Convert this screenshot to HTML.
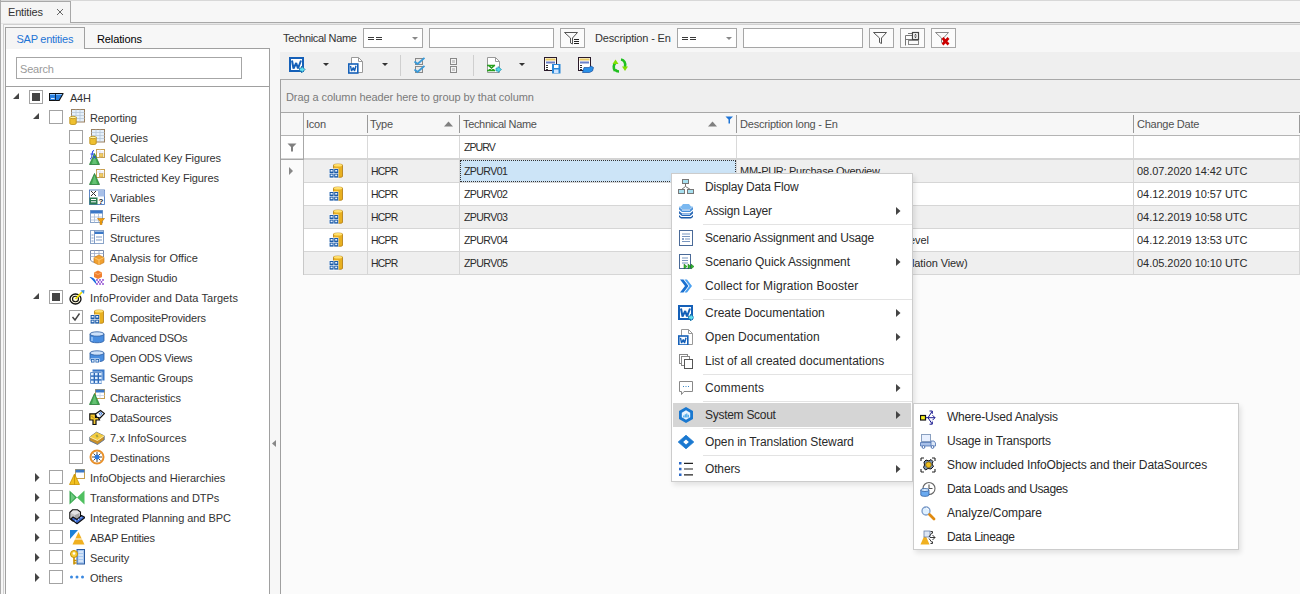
<!DOCTYPE html><html><head><meta charset="utf-8"><style>
html,body{margin:0;padding:0;}
body{width:1300px;height:594px;position:relative;overflow:hidden;background:#f7f7f7;font-family:"Liberation Sans",sans-serif;}
.a{position:absolute;}
.t{white-space:nowrap;}
</style></head><body>
<div class="a" style="left:0px;top:0px;width:1300px;height:22px;background:#f7f7f7;"></div>
<div class="a" style="left:0px;top:0px;width:1300px;height:1px;background:#d8d8d8;"></div>
<div class="a" style="left:70px;top:22px;width:1230px;height:1px;background:#a8a8a8;"></div>
<div class="a" style="left:0px;top:1px;width:71px;height:23px;background:#f5f5f5;border:1px solid #a8a8a8;border-bottom:none;box-sizing:border-box;"></div>
<div class="a t" style="left:8px;top:6.00px;font-size:11px;line-height:12px;color:#333;letter-spacing:-0.170px;">Entities</div>
<svg class="a" style="left:56px;top:8px;" width="8" height="8" viewBox="0 0 8 8"><path d="M1 1L7 7M7 1L1 7" stroke="#666" stroke-width="1"/></svg>
<div class="a" style="left:0px;top:0px;width:1px;height:594px;background:#ababab;"></div>
<div class="a" style="left:1px;top:23px;width:1299px;height:1px;background:#e6e6e6;"></div>
<div class="a" style="left:3px;top:24px;width:1297px;height:1px;background:#d0d0d0;"></div>
<div class="a" style="left:3px;top:24px;width:1px;height:570px;background:#d0d0d0;"></div>
<div class="a" style="left:5px;top:27px;width:80px;height:22px;background:#f5f5f5;border:1px solid #a0a0a0;border-bottom:none;box-sizing:border-box;"></div>
<div class="a t" style="left:16.5px;top:33.00px;font-size:11px;line-height:12px;color:#1e74d6;letter-spacing:-0.258px;">SAP entities</div>
<div class="a t" style="left:97px;top:33.00px;font-size:11px;line-height:12px;color:#000;letter-spacing:-0.122px;">Relations</div>
<div class="a" style="left:5px;top:48px;width:265px;height:546px;background:#ffffff;border:1px solid #a0a0a0;border-bottom:none;box-sizing:border-box;"></div>
<div class="a" style="left:84px;top:48px;width:186px;height:1px;background:#a0a0a0;"></div>
<div class="a" style="left:6px;top:48px;width:78px;height:1px;background:#f5f5f5;"></div>
<div class="a" style="left:16px;top:57px;width:226px;height:22px;background:#ffffff;border:1px solid #a6a6a6;box-sizing:border-box;"></div>
<div class="a t" style="left:20px;top:63.00px;font-size:11px;line-height:12px;color:#9a9a9a;letter-spacing:-0.194px;">Search</div>
<div class="a" style="left:6px;top:86px;width:263px;height:1px;background:#a0a0a0;"></div>
<svg class="a" style="left:13px;top:93px;" width="7" height="6" viewBox="0 0 7 6"><path d="M6 0L6 6L0 6Z" fill="#444"/></svg>
<div class="a" style="left:29px;top:90px;width:14px;height:14px;background:#fff;border:1px solid #a3a3a3;box-sizing:border-box;"></div>
<div class="a" style="left:32px;top:93px;width:8px;height:8px;background:#444;"></div>
<svg class="a" style="left:49px;top:89px;" width="16" height="16" viewBox="0 0 16 16"><path d="M0 4H14.5V5L10.5 12H0Z" fill="#111"/><path d="M1 5H13.3L9.8 11H1Z" fill="#2a80e0"/><path d="M1 5H13.3L12.7 6H1Z" fill="#8cc4ff"/><rect x="2" y="9" width="3.5" height="1" fill="#e0eeff"/><path d="M6.5 5V11.5" stroke="#0a2a50" stroke-width="1"/></svg>
<div class="a t" style="left:70px;top:92.00px;font-size:11px;line-height:12px;color:#333;letter-spacing:-0.259px;">A4H</div>
<svg class="a" style="left:33px;top:113px;" width="7" height="6" viewBox="0 0 7 6"><path d="M6 0L6 6L0 6Z" fill="#444"/></svg>
<div class="a" style="left:49px;top:110px;width:14px;height:14px;background:#fff;border:1px solid #a3a3a3;box-sizing:border-box;"></div>
<svg class="a" style="left:69px;top:109px;" width="16" height="16" viewBox="0 0 16 16"><rect x="2.5" y="0.5" width="13" height="12.5" fill="#e6f0fa" stroke="#9a8060"/><path d="M2.5 3.5H15.5M2.5 6.5H15.5M2.5 9.5H15.5M7 0.5V12.5M11 0.5V12.5" stroke="#b8c8d8" stroke-width="0.8"/><path d="M0.8 8.5V14.5C0.8 16 7.2 16 7.2 14.5V8.5Z" fill="#eec030" stroke="#b88a10" stroke-width="0.8"/><ellipse cx="4" cy="8.5" rx="3.2" ry="1.2" fill="#fff3a0" stroke="#b88a10" stroke-width="0.8"/></svg>
<div class="a t" style="left:90px;top:112.00px;font-size:11px;line-height:12px;color:#333;letter-spacing:-0.101px;">Reporting</div>
<div class="a" style="left:69px;top:130px;width:14px;height:14px;background:#fff;border:1px solid #a3a3a3;box-sizing:border-box;"></div>
<svg class="a" style="left:89px;top:129px;" width="16" height="16" viewBox="0 0 16 16"><rect x="2.5" y="0.5" width="13" height="12.5" fill="#e6f0fa" stroke="#9a8060"/><path d="M2.5 3.5H15.5M2.5 6.5H15.5M2.5 9.5H15.5M7 0.5V12.5M11 0.5V12.5" stroke="#b8c8d8" stroke-width="0.8"/><path d="M0.8 8.5V14.5C0.8 16 7.2 16 7.2 14.5V8.5Z" fill="#eec030" stroke="#b88a10" stroke-width="0.8"/><ellipse cx="4" cy="8.5" rx="3.2" ry="1.2" fill="#fff3a0" stroke="#b88a10" stroke-width="0.8"/></svg>
<div class="a t" style="left:110px;top:132.00px;font-size:11px;line-height:12px;color:#333;letter-spacing:-0.106px;">Queries</div>
<div class="a" style="left:69px;top:150px;width:14px;height:14px;background:#fff;border:1px solid #a3a3a3;box-sizing:border-box;"></div>
<svg class="a" style="left:89px;top:149px;" width="16" height="16" viewBox="0 0 16 16"><rect x="7.5" y="0.5" width="8" height="8" fill="#fff" stroke="#c8a050"/><path d="M7.5 3H15.5M11 0.5V8.5" stroke="#dde" stroke-width="0.8"/><rect x="10.5" y="4.5" width="3.5" height="3.5" fill="#f2cc60" stroke="#c8a050" stroke-width="0.6"/><path d="M0.5 15.5L5.5 4.5L10.5 15.5Z" fill="#3faa50" stroke="#2a7a38" stroke-width="0.8"/><path d="M5.5 6L8 15H3Z" fill="#7fd08a" opacity="0.6"/><path d="M5 1.5C3 1.5 3.5 4 3 6C2.5 8 2.5 10 1 10M1.5 5H5M4.5 7L6.5 9.5M6.5 7L4.5 9.5" fill="none" stroke="#1a3ae8" stroke-width="1"/></svg>
<div class="a t" style="left:110px;top:152.00px;font-size:11px;line-height:12px;color:#333;letter-spacing:-0.135px;">Calculated Key Figures</div>
<div class="a" style="left:69px;top:170px;width:14px;height:14px;background:#fff;border:1px solid #a3a3a3;box-sizing:border-box;"></div>
<svg class="a" style="left:89px;top:169px;" width="16" height="16" viewBox="0 0 16 16"><rect x="7.5" y="0.5" width="8" height="8" fill="#fff" stroke="#c8a050"/><path d="M7.5 3H15.5M11 0.5V8.5" stroke="#dde" stroke-width="0.8"/><rect x="10.5" y="4.5" width="3.5" height="3.5" fill="#f2cc60" stroke="#c8a050" stroke-width="0.6"/><path d="M0.5 15.5L5.5 4.5L10.5 15.5Z" fill="#3faa50" stroke="#2a7a38" stroke-width="0.8"/><path d="M5.5 6L8 15H3Z" fill="#7fd08a" opacity="0.6"/></svg>
<div class="a t" style="left:110px;top:172.00px;font-size:11px;line-height:12px;color:#333;letter-spacing:-0.113px;">Restricted Key Figures</div>
<div class="a" style="left:69px;top:190px;width:14px;height:14px;background:#fff;border:1px solid #a3a3a3;box-sizing:border-box;"></div>
<svg class="a" style="left:89px;top:189px;" width="16" height="16" viewBox="0 0 16 16"><rect x="0.5" y="1" width="15" height="14.5" fill="#fff" stroke="#3a6ab8" stroke-width="0.8"/><rect x="9" y="1.5" width="6.5" height="6" fill="#a8c0e8"/><path d="M2 2L7 7M7 2L2 7" stroke="#333" stroke-width="1"/><rect x="0.5" y="8.5" width="8" height="7" fill="#2a7a50"/><path d="M2 10.5H7M2 12.8H7" stroke="#fff" stroke-width="1"/><text x="9.5" y="15" font-size="8" font-weight="bold" fill="#222" font-family="Liberation Sans">?</text></svg>
<div class="a t" style="left:110px;top:192.00px;font-size:11px;line-height:12px;color:#333;letter-spacing:-0.020px;">Variables</div>
<div class="a" style="left:69px;top:210px;width:14px;height:14px;background:#fff;border:1px solid #a3a3a3;box-sizing:border-box;"></div>
<svg class="a" style="left:89px;top:209px;" width="16" height="16" viewBox="0 0 16 16"><rect x="1.5" y="1.5" width="12" height="12" fill="#fff" stroke="#8aa4c8"/><rect x="1.5" y="1.5" width="12" height="3" fill="#3a78c8"/><path d="M1.5 8H13.5M1.5 11H13.5M5.5 4.5V13.5M9.5 4.5V13.5" stroke="#a8bcd8" stroke-width="0.8"/><path d="M8.5 9.5H15.5L13 12.5V15.5H11V12.5Z" fill="#f0a010" stroke="#c87800" stroke-width="0.6"/></svg>
<div class="a t" style="left:110px;top:212.00px;font-size:11px;line-height:12px;color:#333;letter-spacing:-0.010px;">Filters</div>
<div class="a" style="left:69px;top:230px;width:14px;height:14px;background:#fff;border:1px solid #a3a3a3;box-sizing:border-box;"></div>
<svg class="a" style="left:89px;top:229px;" width="16" height="16" viewBox="0 0 16 16"><rect x="1.5" y="1.5" width="13" height="13" fill="#fff" stroke="#8aa4c8"/><rect x="5.5" y="2.5" width="9" height="2.5" fill="#3a78c8"/><path d="M5.5 1.5V14.5M2.5 6H4.5M2.5 9H4.5M2.5 12H4.5M7 8H13M7 11H13" stroke="#7090c0" stroke-width="0.9"/></svg>
<div class="a t" style="left:110px;top:232.00px;font-size:11px;line-height:12px;color:#333;letter-spacing:-0.027px;">Structures</div>
<div class="a" style="left:69px;top:250px;width:14px;height:14px;background:#fff;border:1px solid #a3a3a3;box-sizing:border-box;"></div>
<svg class="a" style="left:89px;top:249px;" width="16" height="16" viewBox="0 0 16 16"><path d="M1.5 1.5H14.5V8L8 13H3.5L1.5 11Z" fill="#fff" stroke="#7a8aa8"/><path d="M1.5 4.5H14.5M1.5 7.5H8M5.5 1.5V10M10 1.5V6" stroke="#9aaac8" stroke-width="0.8"/><path d="M10 6L15 8.5V13.5L10 16L5 13.5V8.5Z" fill="#f0a030" stroke="#c07010" stroke-width="0.6"/><path d="M5 8.5L10 11L15 8.5M10 11V16" stroke="#ffd080" stroke-width="0.8" fill="none"/></svg>
<div class="a t" style="left:110px;top:252.00px;font-size:11px;line-height:12px;color:#333;letter-spacing:-0.031px;">Analysis for Office</div>
<div class="a" style="left:69px;top:270px;width:14px;height:14px;background:#fff;border:1px solid #a3a3a3;box-sizing:border-box;"></div>
<svg class="a" style="left:89px;top:269px;" width="16" height="16" viewBox="0 0 16 16"><path d="M0.5 8C4 8 7 10 7.5 15.5C5 13 3 10 0.5 8Z" fill="#1a6ae0"/><path d="M9 1.5L13 3.5V8L9 10L5 8V3.5Z" fill="#f08030"/><path d="M5 3.5L9 5.5L13 3.5" stroke="#ffc080" fill="none" stroke-width="0.8"/><g fill="#8a40d0"><circle cx="8" cy="11" r="0.9"/><circle cx="11" cy="11" r="0.9"/><circle cx="14" cy="11" r="0.9"/><circle cx="9.5" cy="13" r="0.9"/><circle cx="12.5" cy="13" r="0.9"/><circle cx="8" cy="15" r="0.9"/><circle cx="11" cy="15" r="0.9"/><circle cx="14" cy="15" r="0.9"/></g></svg>
<div class="a t" style="left:110px;top:272.00px;font-size:11px;line-height:12px;color:#333;letter-spacing:-0.092px;">Design Studio</div>
<svg class="a" style="left:33px;top:293px;" width="7" height="6" viewBox="0 0 7 6"><path d="M6 0L6 6L0 6Z" fill="#444"/></svg>
<div class="a" style="left:49px;top:290px;width:14px;height:14px;background:#fff;border:1px solid #a3a3a3;box-sizing:border-box;"></div>
<div class="a" style="left:52px;top:293px;width:8px;height:8px;background:#444;"></div>
<svg class="a" style="left:69px;top:289px;" width="16" height="16" viewBox="0 0 16 16"><ellipse cx="6.5" cy="10" rx="5.5" ry="5" fill="#fffbe0" stroke="#111" stroke-width="1.3"/><ellipse cx="6.5" cy="10" rx="3" ry="2.7" fill="none" stroke="#111" stroke-width="1.1"/><path d="M6.5 10L13 3" stroke="#f0e000" stroke-width="1.8"/><path d="M11.5 1.5L15.5 1L15 5L13 3Z" fill="#3a90e0"/></svg>
<div class="a t" style="left:90px;top:292.00px;font-size:11px;line-height:12px;color:#333;letter-spacing:0.070px;">InfoProvider and Data Targets</div>
<div class="a" style="left:69px;top:310px;width:14px;height:14px;background:#fff;border:1px solid #a3a3a3;box-sizing:border-box;"></div>
<svg class="a" style="left:71px;top:312px;" width="10" height="10" viewBox="0 0 10 10"><path d="M1.5 5L4 8L8.5 1.5" fill="none" stroke="#444" stroke-width="1.4"/></svg>
<svg class="a" style="left:89px;top:309px;" width="16" height="16" viewBox="0 0 16 16"><path d="M5.5 2C5.5 0.8 14.5 0.8 14.5 2V13.5C14.5 14.7 5.5 14.7 5.5 13.5Z" fill="#e8b020" stroke="#b07a10" stroke-width="0.8"/><ellipse cx="10" cy="2.2" rx="4.3" ry="1.3" fill="#ffe070"/><rect x="1" y="5.5" width="9.5" height="10" fill="#fff"/><rect x="1.6" y="6.0" width="4" height="4" fill="#1a5aa8"/><rect x="2.6" y="7.0" width="2" height="1.6" fill="#e8f2ff"/><rect x="1.6" y="10.6" width="4" height="4" fill="#1a5aa8"/><rect x="2.6" y="11.6" width="2" height="1.6" fill="#e8f2ff"/><rect x="6.199999999999999" y="6.0" width="4" height="4" fill="#1a5aa8"/><rect x="7.199999999999999" y="7.0" width="2" height="1.6" fill="#e8f2ff"/><rect x="6.199999999999999" y="10.6" width="4" height="4" fill="#1a5aa8"/><rect x="7.199999999999999" y="11.6" width="2" height="1.6" fill="#e8f2ff"/></svg>
<div class="a t" style="left:110px;top:312.00px;font-size:11px;line-height:12px;color:#333;letter-spacing:-0.185px;">CompositeProviders</div>
<div class="a" style="left:69px;top:330px;width:14px;height:14px;background:#fff;border:1px solid #a3a3a3;box-sizing:border-box;"></div>
<svg class="a" style="left:89px;top:329px;" width="16" height="16" viewBox="0 0 16 16"><path d="M1 5V11.5C1 14.5 15 14.5 15 11.5V5Z" fill="#4a8ee0" stroke="#2a5aa0" stroke-width="0.8"/><ellipse cx="8" cy="5" rx="7" ry="2.2" fill="#cfe2fa" stroke="#2a5aa0" stroke-width="0.8"/><path d="M3 8V12" stroke="#a0c8f8" stroke-width="1.5"/></svg>
<div class="a t" style="left:110px;top:332.00px;font-size:11px;line-height:12px;color:#333;letter-spacing:-0.328px;">Advanced DSOs</div>
<div class="a" style="left:69px;top:350px;width:14px;height:14px;background:#fff;border:1px solid #a3a3a3;box-sizing:border-box;"></div>
<svg class="a" style="left:89px;top:349px;" width="16" height="16" viewBox="0 0 16 16"><path d="M1 4V10.5C1 13.5 15 13.5 15 10.5V4Z" fill="#4a8ee0" stroke="#2a5aa0" stroke-width="0.8"/><ellipse cx="8" cy="4" rx="7" ry="2.2" fill="#cfe2fa" stroke="#2a5aa0" stroke-width="0.8"/><rect x="1.5" y="9.5" width="9" height="6" fill="#fff"/><rect x="2" y="10" width="3.5" height="3.5" fill="#2060b0"/><rect x="6.5" y="10" width="3.5" height="3.5" fill="#2060b0"/><rect x="2.8" y="10.8" width="1.9" height="1.9" fill="#dfeeff"/><rect x="7.3" y="10.8" width="1.9" height="1.9" fill="#dfeeff"/></svg>
<div class="a t" style="left:110px;top:352.00px;font-size:11px;line-height:12px;color:#333;letter-spacing:-0.278px;">Open ODS Views</div>
<div class="a" style="left:69px;top:370px;width:14px;height:14px;background:#fff;border:1px solid #a3a3a3;box-sizing:border-box;"></div>
<svg class="a" style="left:89px;top:369px;" width="16" height="16" viewBox="0 0 16 16"><rect x="3.5" y="0.5" width="12" height="11" fill="#3a78c8"/><rect x="1" y="3" width="12" height="12" fill="#2a68b8" stroke="#fff" stroke-width="0.6"/><rect x="2" y="4.0" width="2.6" height="2.4" fill="#dfeeff"/><rect x="2" y="7.8" width="2.6" height="2.4" fill="#dfeeff"/><rect x="2" y="11.6" width="2.6" height="2.4" fill="#dfeeff"/><rect x="6" y="4.0" width="2.6" height="2.4" fill="#dfeeff"/><rect x="6" y="7.8" width="2.6" height="2.4" fill="#dfeeff"/><rect x="6" y="11.6" width="2.6" height="2.4" fill="#dfeeff"/><rect x="10" y="4.0" width="2.6" height="2.4" fill="#dfeeff"/><rect x="10" y="7.8" width="2.6" height="2.4" fill="#dfeeff"/><rect x="10" y="11.6" width="2.6" height="2.4" fill="#dfeeff"/></svg>
<div class="a t" style="left:110px;top:372.00px;font-size:11px;line-height:12px;color:#333;letter-spacing:-0.150px;">Semantic Groups</div>
<div class="a" style="left:69px;top:390px;width:14px;height:14px;background:#fff;border:1px solid #a3a3a3;box-sizing:border-box;"></div>
<svg class="a" style="left:89px;top:389px;" width="16" height="16" viewBox="0 0 16 16"><rect x="6.5" y="0.5" width="9" height="9" fill="#fff" stroke="#c8a050"/><rect x="6.5" y="0.5" width="9" height="3" fill="#3a78c8"/><path d="M11 3.5V9.5M6.5 6.5H15.5" stroke="#c8d4e8" stroke-width="0.8"/><path d="M0.5 15.5L5.5 4.5L10.5 15.5Z" fill="#3faa50" stroke="#2a7a38" stroke-width="0.8"/><path d="M5.5 6L8 15H3Z" fill="#7fd08a" opacity="0.6"/></svg>
<div class="a t" style="left:110px;top:392.00px;font-size:11px;line-height:12px;color:#333;letter-spacing:-0.133px;">Characteristics</div>
<div class="a" style="left:69px;top:410px;width:14px;height:14px;background:#fff;border:1px solid #a3a3a3;box-sizing:border-box;"></div>
<svg class="a" style="left:89px;top:409px;" width="16" height="16" viewBox="0 0 16 16"><path d="M0.8 4.8H6.5V8.5H9.5L10.5 11H7V15.5H4V11H0.8Z" fill="#f4c830" stroke="#111" stroke-width="1.2"/><path d="M2.5 7L5 9.5" stroke="#a07000" stroke-width="0.8"/><path d="M6.5 5L11.5 1.5L15.5 4.5L11 9L7.5 8Z" fill="#fff" stroke="#111" stroke-width="1.2"/><path d="M10 4L11.5 6.5M11.5 3L13 5.5" stroke="#2a6ad0" stroke-width="1.1"/></svg>
<div class="a t" style="left:110px;top:412.00px;font-size:11px;line-height:12px;color:#333;letter-spacing:-0.221px;">DataSources</div>
<div class="a" style="left:69px;top:430px;width:14px;height:14px;background:#fff;border:1px solid #a3a3a3;box-sizing:border-box;"></div>
<svg class="a" style="left:89px;top:429px;" width="16" height="16" viewBox="0 0 16 16"><path d="M0.8 8L7.5 3.2L15.2 6.8V10.8L8.5 15.5L0.8 11.8Z" fill="#c8902a" stroke="#5a7090" stroke-width="0.9"/><path d="M0.8 8L7.5 3.2L15.2 6.8L8.5 11.5Z" fill="#f4cc40"/><path d="M0.8 8L8.5 11.5L15.2 6.8" fill="none" stroke="#fff4c0" stroke-width="0.9"/><path d="M6.5 6L8.5 5.5L9.5 8L7.5 8.5Z" fill="#a8a040"/></svg>
<div class="a t" style="left:110px;top:432.00px;font-size:11px;line-height:12px;color:#333;letter-spacing:-0.003px;">7.x InfoSources</div>
<div class="a" style="left:69px;top:450px;width:14px;height:14px;background:#fff;border:1px solid #a3a3a3;box-sizing:border-box;"></div>
<svg class="a" style="left:89px;top:449px;" width="16" height="16" viewBox="0 0 16 16"><circle cx="8" cy="8" r="6.5" fill="#fff" stroke="#e8902a" stroke-width="2"/><path d="M8 3V13M3 8H13M4.5 4.5L11.5 11.5M11.5 4.5L4.5 11.5" stroke="#333" stroke-width="0.9"/><circle cx="8" cy="8" r="2.5" fill="#2a78e0"/></svg>
<div class="a t" style="left:110px;top:452.00px;font-size:11px;line-height:12px;color:#333;letter-spacing:-0.059px;">Destinations</div>
<svg class="a" style="left:35px;top:473px;" width="5" height="9" viewBox="0 0 5 9"><path d="M0 0L4.5 4.5L0 9Z" fill="#444"/></svg>
<div class="a" style="left:49px;top:470px;width:14px;height:14px;background:#fff;border:1px solid #a3a3a3;box-sizing:border-box;"></div>
<svg class="a" style="left:69px;top:469px;" width="16" height="16" viewBox="0 0 16 16"><rect x="6.5" y="0.5" width="9" height="9" fill="#fff" stroke="#c8a050"/><rect x="6.5" y="0.5" width="9" height="3" fill="#3a78c8"/><path d="M0.5 15.5L5.5 5L10.5 15.5Z" fill="#f0c020" stroke="#c89000" stroke-width="0.8"/><path d="M5.5 6V15.5" stroke="#c89000" stroke-width="0.8"/></svg>
<div class="a t" style="left:90px;top:472.00px;font-size:11px;line-height:12px;color:#333;letter-spacing:-0.017px;">InfoObjects and Hierarchies</div>
<svg class="a" style="left:35px;top:493px;" width="5" height="9" viewBox="0 0 5 9"><path d="M0 0L4.5 4.5L0 9Z" fill="#444"/></svg>
<div class="a" style="left:49px;top:490px;width:14px;height:14px;background:#fff;border:1px solid #a3a3a3;box-sizing:border-box;"></div>
<svg class="a" style="left:69px;top:489px;" width="16" height="16" viewBox="0 0 16 16"><path d="M0.5 1.5L8 8.5L0.5 15.5Z" fill="#3aa850"/><path d="M15.5 1.5L8 8.5L15.5 15.5Z" fill="#50c060"/><path d="M2 4L6 8.5L2 13Z" fill="#90e0a0" opacity="0.6"/></svg>
<div class="a t" style="left:90px;top:492.00px;font-size:11px;line-height:12px;color:#333;letter-spacing:-0.080px;">Transformations and DTPs</div>
<svg class="a" style="left:35px;top:513px;" width="5" height="9" viewBox="0 0 5 9"><path d="M0 0L4.5 4.5L0 9Z" fill="#444"/></svg>
<div class="a" style="left:49px;top:510px;width:14px;height:14px;background:#fff;border:1px solid #a3a3a3;box-sizing:border-box;"></div>
<svg class="a" style="left:69px;top:509px;" width="16" height="16" viewBox="0 0 16 16"><path d="M0.8 3.5L3.5 0.8H8.5L11.5 3V9.5L8 12H3.5L0.8 9.5Z" fill="#e4e4e4" stroke="#111" stroke-width="1.1"/><path d="M2 4L6 6V11L2 9Z" fill="#c4c4c4"/><path d="M6 6L10.5 4V9L6 11Z" fill="#a8a8a8"/><path d="M2 10L8 14.8L16 8.5L12.5 6.5L8 10.5L4 8Z" fill="#3a68d0" stroke="#111" stroke-width="1.1" stroke-linejoin="round"/><path d="M6 11.5L7 12.3M9 10.8L10 10M11.5 9L12.5 8.2" stroke="#a8c8ff" stroke-width="1.1"/></svg>
<div class="a t" style="left:90px;top:512.00px;font-size:11px;line-height:12px;color:#333;letter-spacing:-0.062px;">Integrated Planning and BPC</div>
<svg class="a" style="left:35px;top:533px;" width="5" height="9" viewBox="0 0 5 9"><path d="M0 0L4.5 4.5L0 9Z" fill="#444"/></svg>
<div class="a" style="left:49px;top:530px;width:14px;height:14px;background:#fff;border:1px solid #a3a3a3;box-sizing:border-box;"></div>
<svg class="a" style="left:69px;top:529px;" width="16" height="16" viewBox="0 0 16 16"><path d="M1 1H9L1 10Z" fill="#1a80d8"/><path d="M3.5 15.5L9.5 3L15.5 15.5Z" fill="#f0b020"/><path d="M6 10H13" stroke="#fff" stroke-width="1"/></svg>
<div class="a t" style="left:90px;top:532.00px;font-size:11px;line-height:12px;color:#333;letter-spacing:-0.283px;">ABAP Entities</div>
<svg class="a" style="left:35px;top:553px;" width="5" height="9" viewBox="0 0 5 9"><path d="M0 0L4.5 4.5L0 9Z" fill="#444"/></svg>
<div class="a" style="left:49px;top:550px;width:14px;height:14px;background:#fff;border:1px solid #a3a3a3;box-sizing:border-box;"></div>
<svg class="a" style="left:69px;top:549px;" width="16" height="16" viewBox="0 0 16 16"><rect x="8" y="0.5" width="7.5" height="14.5" fill="#a8c8f0" stroke="#2a5aa0"/><path d="M9.5 3H14M9.5 6H14M9.5 9H14M9.5 12H14" stroke="#fff" stroke-width="1"/><circle cx="5" cy="5" r="3.5" fill="#f8d040" stroke="#c89000"/><circle cx="5" cy="4.5" r="1.2" fill="#fff"/><path d="M5 8.5V15.5M5 11.5H7.5M5 14H7.5" stroke="#c89000" stroke-width="1.6"/></svg>
<div class="a t" style="left:90px;top:552.00px;font-size:11px;line-height:12px;color:#333;letter-spacing:-0.079px;">Security</div>
<svg class="a" style="left:35px;top:573px;" width="5" height="9" viewBox="0 0 5 9"><path d="M0 0L4.5 4.5L0 9Z" fill="#444"/></svg>
<div class="a" style="left:49px;top:570px;width:14px;height:14px;background:#fff;border:1px solid #a3a3a3;box-sizing:border-box;"></div>
<svg class="a" style="left:69px;top:569px;" width="16" height="16" viewBox="0 0 16 16"><circle cx="2.5" cy="8" r="1.5" fill="#3a88e0"/><circle cx="8" cy="8" r="1.5" fill="#3a88e0"/><circle cx="13.5" cy="8" r="1.5" fill="#3a88e0"/></svg>
<div class="a t" style="left:90px;top:572.00px;font-size:11px;line-height:12px;color:#333;letter-spacing:-0.106px;">Others</div>
<div class="a" style="left:270px;top:48px;width:10px;height:546px;background:#f7f7f7;"></div>
<svg class="a" style="left:272px;top:440px;" width="5" height="7" viewBox="0 0 5 7"><path d="M4 0L4 7L0 3.5Z" fill="#888"/></svg>
<div class="a" style="left:280px;top:25px;width:1020px;height:27px;background:#f7f7f7;"></div>
<div class="a t" style="left:283px;top:32.00px;font-size:11px;line-height:12px;color:#333;letter-spacing:-0.336px;">Technical Name</div>
<div class="a" style="left:363px;top:28px;width:60px;height:20px;background:#fff;border:1px solid #a6a6a6;box-sizing:border-box;"></div>
<svg class="a" style="left:368px;top:36px;" width="16" height="5" viewBox="0 0 16 5"><path d="M0 1.5H6M8 1.5H14M0 3.5H6M8 3.5H14" stroke="#3a3a3a" stroke-width="1"/></svg>
<svg class="a" style="left:412px;top:37px;" width="7" height="4" viewBox="0 0 7 4"><path d="M0 0L6 0L3 3Z" fill="#888"/></svg>
<div class="a" style="left:429px;top:28px;width:125px;height:20px;background:#fff;border:1px solid #a6a6a6;box-sizing:border-box;"></div>
<div class="a" style="left:560px;top:28px;width:25px;height:20px;background:#fbfbfb;border:1px solid #a6a6a6;box-sizing:border-box;"></div>
<svg class="a" style="left:563px;top:30px;" width="18" height="16" viewBox="0 0 18 16"><path d="M1.5 2.5H14.5L9.5 8V14L7.5 13V8Z" fill="none" stroke="#555" stroke-width="1"/><rect x="10" y="8" width="7" height="8" fill="#fbfbfb"/><path d="M11 9.5H16M11 11.5H16M11 13.5H16" stroke="#222" stroke-width="1"/></svg>
<div class="a t" style="left:595px;top:32.00px;font-size:11px;line-height:12px;color:#333;letter-spacing:-0.158px;">Description - En</div>
<div class="a" style="left:677px;top:28px;width:60px;height:20px;background:#fff;border:1px solid #a6a6a6;box-sizing:border-box;"></div>
<svg class="a" style="left:682px;top:36px;" width="16" height="5" viewBox="0 0 16 5"><path d="M0 1.5H6M8 1.5H14M0 3.5H6M8 3.5H14" stroke="#3a3a3a" stroke-width="1"/></svg>
<svg class="a" style="left:726px;top:37px;" width="7" height="4" viewBox="0 0 7 4"><path d="M0 0L6 0L3 3Z" fill="#888"/></svg>
<div class="a" style="left:743px;top:28px;width:120px;height:20px;background:#fff;border:1px solid #a6a6a6;box-sizing:border-box;"></div>
<div class="a" style="left:869px;top:28px;width:25px;height:20px;background:#fbfbfb;border:1px solid #a6a6a6;box-sizing:border-box;"></div>
<svg class="a" style="left:872px;top:30px;" width="18" height="16" viewBox="0 0 18 16"><path d="M1.5 2.5H14.5L9.5 8V13.5L7.5 12.5V8Z" fill="none" stroke="#555" stroke-width="1"/></svg>
<div class="a" style="left:900px;top:28px;width:25px;height:20px;background:#fbfbfb;border:1px solid #a6a6a6;box-sizing:border-box;"></div>
<svg class="a" style="left:903px;top:30px;" width="18" height="16" viewBox="0 0 18 16"><path d="M2.5 15.5V5.5H15M5 3.5H15.5" fill="none" stroke="#777" stroke-width="1"/><rect x="9.5" y="2.5" width="6" height="7" fill="#fff" stroke="#444" stroke-width="1.2"/><path d="M12.5 3.8L11 5.5H14ZM12.5 8.2L11 6.5H14Z" fill="#444"/><rect x="5.5" y="10.5" width="10" height="4" fill="none" stroke="#888" stroke-width="1"/><path d="M2.5 9.5H9" stroke="#777"/></svg>
<div class="a" style="left:931px;top:28px;width:25px;height:20px;background:#fbfbfb;border:1px solid #a6a6a6;box-sizing:border-box;"></div>
<svg class="a" style="left:934px;top:30px;" width="18" height="16" viewBox="0 0 18 16"><path d="M1.5 2.5H14.5L9.5 8V13.5L7.5 12.5V8Z" fill="none" stroke="#888" stroke-width="1"/><path d="M8.5 8L14.5 14.5M14.5 8L8.5 14.5" stroke="#cc0000" stroke-width="2.6"/></svg>
<div class="a" style="left:280px;top:52px;width:1020px;height:27px;background:#efefef;"></div>
<svg class="a" style="left:323px;top:63px;" width="6" height="4" viewBox="0 0 6 4"><path d="M0 0H6L3 3Z" fill="#333"/></svg>
<svg class="a" style="left:382px;top:63px;" width="6" height="4" viewBox="0 0 6 4"><path d="M0 0H6L3 3Z" fill="#333"/></svg>
<svg class="a" style="left:519px;top:63px;" width="6" height="4" viewBox="0 0 6 4"><path d="M0 0H6L3 3Z" fill="#333"/></svg>
<div class="a" style="left:400px;top:55px;width:1px;height:21px;background:#cfcfcf;"></div>
<div class="a" style="left:473px;top:55px;width:1px;height:21px;background:#cfcfcf;"></div>
<div class="a" style="left:280px;top:79px;width:1020px;height:515px;background:#fbfbfb;border-left:1px solid #a0a0a0;border-top:1px solid #a8a8a8;box-sizing:border-box;"></div>
<div class="a" style="left:281px;top:80px;width:1019px;height:32px;background:#efefef;"></div>
<div class="a t" style="left:286px;top:91.00px;font-size:11px;line-height:12px;color:#7a7a7a;letter-spacing:-0.084px;">Drag a column header here to group by that column</div>
<div class="a" style="left:281px;top:112px;width:1019px;height:1px;background:#a8a8a8;"></div>
<div class="a" style="left:281px;top:113px;width:1019px;height:22px;background:#f7f7f7;"></div>
<div class="a" style="left:281px;top:135px;width:1019px;height:1px;background:#b4b4b4;"></div>
<div class="a" style="left:367px;top:115px;width:1px;height:18px;background:#9a9a9a;"></div>
<div class="a" style="left:459px;top:115px;width:1px;height:18px;background:#9a9a9a;"></div>
<div class="a" style="left:736px;top:115px;width:1px;height:18px;background:#9a9a9a;"></div>
<div class="a" style="left:1133px;top:115px;width:1px;height:18px;background:#9a9a9a;"></div>
<div class="a" style="left:1299px;top:115px;width:1px;height:18px;background:#9a9a9a;"></div>
<div class="a" style="left:303px;top:113px;width:1px;height:46px;background:#a8a8a8;"></div>
<div class="a t" style="left:306px;top:118.00px;font-size:11px;line-height:12px;color:#505050;letter-spacing:-0.250px;">Icon</div>
<div class="a t" style="left:370px;top:118.00px;font-size:11px;line-height:12px;color:#505050;letter-spacing:-0.250px;">Type</div>
<div class="a t" style="left:463px;top:118.00px;font-size:11px;line-height:12px;color:#505050;letter-spacing:-0.336px;">Technical Name</div>
<div class="a t" style="left:740px;top:118.00px;font-size:11px;line-height:12px;color:#505050;letter-spacing:-0.211px;">Description long - En</div>
<div class="a t" style="left:1137px;top:118.00px;font-size:11px;line-height:12px;color:#505050;letter-spacing:-0.250px;">Change Date</div>
<svg class="a" style="left:444px;top:121px;" width="10" height="6" viewBox="0 0 10 6"><path d="M0 5.5L4.5 0.5L9 5.5Z" fill="#808080"/></svg>
<svg class="a" style="left:708px;top:121px;" width="10" height="6" viewBox="0 0 10 6"><path d="M0 5.5L4.5 0.5L9 5.5Z" fill="#808080"/></svg>
<svg class="a" style="left:725px;top:116px;" width="9" height="8" viewBox="0 0 9 8"><path d="M0.5 0.5H8L5 3.5V7.5H3.5V3.5Z" fill="#1e74d6"/></svg>
<div class="a" style="left:281px;top:136px;width:1018px;height:22px;background:#ffffff;"></div>
<div class="a" style="left:303px;top:113px;width:1px;height:46px;background:#a8a8a8;"></div>
<div class="a" style="left:367px;top:136px;width:1px;height:22px;background:#d9d9d9;"></div>
<div class="a" style="left:459px;top:136px;width:1px;height:22px;background:#d9d9d9;"></div>
<div class="a" style="left:736px;top:136px;width:1px;height:22px;background:#d9d9d9;"></div>
<div class="a" style="left:1133px;top:136px;width:1px;height:22px;background:#d9d9d9;"></div>
<div class="a" style="left:1299px;top:136px;width:1px;height:22px;background:#d9d9d9;"></div>
<svg class="a" style="left:287px;top:143px;" width="10" height="9" viewBox="0 0 10 9"><path d="M0.5 0.5H9.5L6 4V8.5H4V4Z" fill="#808080"/></svg>
<div class="a t" style="left:464px;top:141.00px;font-size:10.6px;line-height:12px;color:#2a2a2a;letter-spacing:-0.971px;">ZPURV</div>
<div class="a" style="left:281px;top:158px;width:1019px;height:2px;background:#d4d4d4;"></div>
<div class="a" style="left:281px;top:159px;width:22px;height:1px;background:#a8a8a8;"></div>
<div class="a" style="left:303px;top:160px;width:997px;height:22px;background:#efefef;"></div>
<div class="a" style="left:303px;top:182px;width:997px;height:1px;background:#d6d6d6;"></div>
<div class="a" style="left:367px;top:160px;width:1px;height:23px;background:#d6d6d6;"></div>
<div class="a" style="left:459px;top:160px;width:1px;height:23px;background:#d6d6d6;"></div>
<div class="a" style="left:736px;top:160px;width:1px;height:23px;background:#d6d6d6;"></div>
<div class="a" style="left:1133px;top:160px;width:1px;height:23px;background:#d6d6d6;"></div>
<div class="a" style="left:1299px;top:160px;width:1px;height:23px;background:#d6d6d6;"></div>
<svg class="a" style="left:328px;top:163px;" width="16" height="16" viewBox="0 0 16 16"><path d="M5.5 2C5.5 0.8 14.5 0.8 14.5 2V13.5C14.5 14.7 5.5 14.7 5.5 13.5Z" fill="#e8b020" stroke="#b07a10" stroke-width="0.8"/><ellipse cx="10" cy="2.2" rx="4.3" ry="1.3" fill="#ffe070"/><rect x="1" y="5.5" width="9.5" height="10" fill="#fff"/><rect x="1.6" y="6.0" width="4" height="4" fill="#1a5aa8"/><rect x="2.6" y="7.0" width="2" height="1.6" fill="#e8f2ff"/><rect x="1.6" y="10.6" width="4" height="4" fill="#1a5aa8"/><rect x="2.6" y="11.6" width="2" height="1.6" fill="#e8f2ff"/><rect x="6.199999999999999" y="6.0" width="4" height="4" fill="#1a5aa8"/><rect x="7.199999999999999" y="7.0" width="2" height="1.6" fill="#e8f2ff"/><rect x="6.199999999999999" y="10.6" width="4" height="4" fill="#1a5aa8"/><rect x="7.199999999999999" y="11.6" width="2" height="1.6" fill="#e8f2ff"/></svg>
<div class="a t" style="left:371px;top:166.00px;font-size:10.4px;line-height:11px;color:#2a2a2a;letter-spacing:-0.712px;">HCPR</div>
<div class="a t" style="left:464px;top:165.00px;font-size:10.6px;line-height:12px;color:#2a2a2a;letter-spacing:-0.612px;">ZPURV01</div>
<div class="a t" style="left:740px;top:165.00px;font-size:11px;line-height:12px;color:#2a2a2a;letter-spacing:-0.284px;">MM-PUR: Purchase Overview</div>
<div class="a t" style="left:1137px;top:165.00px;font-size:11px;line-height:12px;color:#2a2a2a;letter-spacing:-0.043px;">08.07.2020 14:42 UTC</div>
<div class="a" style="left:303px;top:183px;width:997px;height:22px;background:#ffffff;"></div>
<div class="a" style="left:303px;top:205px;width:997px;height:1px;background:#d6d6d6;"></div>
<div class="a" style="left:367px;top:183px;width:1px;height:23px;background:#d6d6d6;"></div>
<div class="a" style="left:459px;top:183px;width:1px;height:23px;background:#d6d6d6;"></div>
<div class="a" style="left:736px;top:183px;width:1px;height:23px;background:#d6d6d6;"></div>
<div class="a" style="left:1133px;top:183px;width:1px;height:23px;background:#d6d6d6;"></div>
<div class="a" style="left:1299px;top:183px;width:1px;height:23px;background:#d6d6d6;"></div>
<svg class="a" style="left:328px;top:186px;" width="16" height="16" viewBox="0 0 16 16"><path d="M5.5 2C5.5 0.8 14.5 0.8 14.5 2V13.5C14.5 14.7 5.5 14.7 5.5 13.5Z" fill="#e8b020" stroke="#b07a10" stroke-width="0.8"/><ellipse cx="10" cy="2.2" rx="4.3" ry="1.3" fill="#ffe070"/><rect x="1" y="5.5" width="9.5" height="10" fill="#fff"/><rect x="1.6" y="6.0" width="4" height="4" fill="#1a5aa8"/><rect x="2.6" y="7.0" width="2" height="1.6" fill="#e8f2ff"/><rect x="1.6" y="10.6" width="4" height="4" fill="#1a5aa8"/><rect x="2.6" y="11.6" width="2" height="1.6" fill="#e8f2ff"/><rect x="6.199999999999999" y="6.0" width="4" height="4" fill="#1a5aa8"/><rect x="7.199999999999999" y="7.0" width="2" height="1.6" fill="#e8f2ff"/><rect x="6.199999999999999" y="10.6" width="4" height="4" fill="#1a5aa8"/><rect x="7.199999999999999" y="11.6" width="2" height="1.6" fill="#e8f2ff"/></svg>
<div class="a t" style="left:371px;top:189.00px;font-size:10.4px;line-height:11px;color:#2a2a2a;letter-spacing:-0.712px;">HCPR</div>
<div class="a t" style="left:464px;top:188.00px;font-size:10.6px;line-height:12px;color:#2a2a2a;letter-spacing:-0.612px;">ZPURV02</div>
<div class="a t" style="left:1137px;top:188.00px;font-size:11px;line-height:12px;color:#2a2a2a;letter-spacing:-0.043px;">04.12.2019 10:57 UTC</div>
<div class="a" style="left:303px;top:206px;width:997px;height:22px;background:#efefef;"></div>
<div class="a" style="left:303px;top:228px;width:997px;height:1px;background:#d6d6d6;"></div>
<div class="a" style="left:367px;top:206px;width:1px;height:23px;background:#d6d6d6;"></div>
<div class="a" style="left:459px;top:206px;width:1px;height:23px;background:#d6d6d6;"></div>
<div class="a" style="left:736px;top:206px;width:1px;height:23px;background:#d6d6d6;"></div>
<div class="a" style="left:1133px;top:206px;width:1px;height:23px;background:#d6d6d6;"></div>
<div class="a" style="left:1299px;top:206px;width:1px;height:23px;background:#d6d6d6;"></div>
<svg class="a" style="left:328px;top:209px;" width="16" height="16" viewBox="0 0 16 16"><path d="M5.5 2C5.5 0.8 14.5 0.8 14.5 2V13.5C14.5 14.7 5.5 14.7 5.5 13.5Z" fill="#e8b020" stroke="#b07a10" stroke-width="0.8"/><ellipse cx="10" cy="2.2" rx="4.3" ry="1.3" fill="#ffe070"/><rect x="1" y="5.5" width="9.5" height="10" fill="#fff"/><rect x="1.6" y="6.0" width="4" height="4" fill="#1a5aa8"/><rect x="2.6" y="7.0" width="2" height="1.6" fill="#e8f2ff"/><rect x="1.6" y="10.6" width="4" height="4" fill="#1a5aa8"/><rect x="2.6" y="11.6" width="2" height="1.6" fill="#e8f2ff"/><rect x="6.199999999999999" y="6.0" width="4" height="4" fill="#1a5aa8"/><rect x="7.199999999999999" y="7.0" width="2" height="1.6" fill="#e8f2ff"/><rect x="6.199999999999999" y="10.6" width="4" height="4" fill="#1a5aa8"/><rect x="7.199999999999999" y="11.6" width="2" height="1.6" fill="#e8f2ff"/></svg>
<div class="a t" style="left:371px;top:212.00px;font-size:10.4px;line-height:11px;color:#2a2a2a;letter-spacing:-0.712px;">HCPR</div>
<div class="a t" style="left:464px;top:211.00px;font-size:10.6px;line-height:12px;color:#2a2a2a;letter-spacing:-0.612px;">ZPURV03</div>
<div class="a t" style="left:1137px;top:211.00px;font-size:11px;line-height:12px;color:#2a2a2a;letter-spacing:-0.043px;">04.12.2019 10:58 UTC</div>
<div class="a" style="left:303px;top:229px;width:997px;height:22px;background:#ffffff;"></div>
<div class="a" style="left:303px;top:251px;width:997px;height:1px;background:#d6d6d6;"></div>
<div class="a" style="left:367px;top:229px;width:1px;height:23px;background:#d6d6d6;"></div>
<div class="a" style="left:459px;top:229px;width:1px;height:23px;background:#d6d6d6;"></div>
<div class="a" style="left:736px;top:229px;width:1px;height:23px;background:#d6d6d6;"></div>
<div class="a" style="left:1133px;top:229px;width:1px;height:23px;background:#d6d6d6;"></div>
<div class="a" style="left:1299px;top:229px;width:1px;height:23px;background:#d6d6d6;"></div>
<svg class="a" style="left:328px;top:232px;" width="16" height="16" viewBox="0 0 16 16"><path d="M5.5 2C5.5 0.8 14.5 0.8 14.5 2V13.5C14.5 14.7 5.5 14.7 5.5 13.5Z" fill="#e8b020" stroke="#b07a10" stroke-width="0.8"/><ellipse cx="10" cy="2.2" rx="4.3" ry="1.3" fill="#ffe070"/><rect x="1" y="5.5" width="9.5" height="10" fill="#fff"/><rect x="1.6" y="6.0" width="4" height="4" fill="#1a5aa8"/><rect x="2.6" y="7.0" width="2" height="1.6" fill="#e8f2ff"/><rect x="1.6" y="10.6" width="4" height="4" fill="#1a5aa8"/><rect x="2.6" y="11.6" width="2" height="1.6" fill="#e8f2ff"/><rect x="6.199999999999999" y="6.0" width="4" height="4" fill="#1a5aa8"/><rect x="7.199999999999999" y="7.0" width="2" height="1.6" fill="#e8f2ff"/><rect x="6.199999999999999" y="10.6" width="4" height="4" fill="#1a5aa8"/><rect x="7.199999999999999" y="11.6" width="2" height="1.6" fill="#e8f2ff"/></svg>
<div class="a t" style="left:371px;top:235.00px;font-size:10.4px;line-height:11px;color:#2a2a2a;letter-spacing:-0.712px;">HCPR</div>
<div class="a t" style="left:464px;top:234.00px;font-size:10.6px;line-height:12px;color:#2a2a2a;letter-spacing:-0.612px;">ZPURV04</div>
<div class="a t" style="left:909px;top:234.00px;font-size:11px;line-height:12px;color:#2a2a2a;letter-spacing:-0.100px;">evel</div>
<div class="a t" style="left:1137px;top:234.00px;font-size:11px;line-height:12px;color:#2a2a2a;letter-spacing:-0.043px;">04.12.2019 13:53 UTC</div>
<div class="a" style="left:303px;top:252px;width:997px;height:22px;background:#efefef;"></div>
<div class="a" style="left:303px;top:274px;width:997px;height:1px;background:#d6d6d6;"></div>
<div class="a" style="left:367px;top:252px;width:1px;height:23px;background:#d6d6d6;"></div>
<div class="a" style="left:459px;top:252px;width:1px;height:23px;background:#d6d6d6;"></div>
<div class="a" style="left:736px;top:252px;width:1px;height:23px;background:#d6d6d6;"></div>
<div class="a" style="left:1133px;top:252px;width:1px;height:23px;background:#d6d6d6;"></div>
<div class="a" style="left:1299px;top:252px;width:1px;height:23px;background:#d6d6d6;"></div>
<svg class="a" style="left:328px;top:255px;" width="16" height="16" viewBox="0 0 16 16"><path d="M5.5 2C5.5 0.8 14.5 0.8 14.5 2V13.5C14.5 14.7 5.5 14.7 5.5 13.5Z" fill="#e8b020" stroke="#b07a10" stroke-width="0.8"/><ellipse cx="10" cy="2.2" rx="4.3" ry="1.3" fill="#ffe070"/><rect x="1" y="5.5" width="9.5" height="10" fill="#fff"/><rect x="1.6" y="6.0" width="4" height="4" fill="#1a5aa8"/><rect x="2.6" y="7.0" width="2" height="1.6" fill="#e8f2ff"/><rect x="1.6" y="10.6" width="4" height="4" fill="#1a5aa8"/><rect x="2.6" y="11.6" width="2" height="1.6" fill="#e8f2ff"/><rect x="6.199999999999999" y="6.0" width="4" height="4" fill="#1a5aa8"/><rect x="7.199999999999999" y="7.0" width="2" height="1.6" fill="#e8f2ff"/><rect x="6.199999999999999" y="10.6" width="4" height="4" fill="#1a5aa8"/><rect x="7.199999999999999" y="11.6" width="2" height="1.6" fill="#e8f2ff"/></svg>
<div class="a t" style="left:371px;top:258.00px;font-size:10.4px;line-height:11px;color:#2a2a2a;letter-spacing:-0.712px;">HCPR</div>
<div class="a t" style="left:464px;top:257.00px;font-size:10.6px;line-height:12px;color:#2a2a2a;letter-spacing:-0.612px;">ZPURV05</div>
<div class="a t" style="left:912px;top:257.00px;font-size:11px;line-height:12px;color:#2a2a2a;letter-spacing:-0.100px;">lation View)</div>
<div class="a t" style="left:1137px;top:257.00px;font-size:11px;line-height:12px;color:#2a2a2a;letter-spacing:-0.043px;">04.05.2020 10:10 UTC</div>
<div class="a" style="left:303px;top:113px;width:1px;height:162px;background:#c8c8c8;"></div>
<div class="a" style="left:303px;top:113px;width:1px;height:47px;background:#a8a8a8;"></div>
<svg class="a" style="left:289px;top:167px;" width="5" height="8" viewBox="0 0 5 8"><path d="M0 0L4 4L0 8Z" fill="#888"/></svg>
<div class="a" style="left:460px;top:160px;width:276px;height:22px;background:#cce4f7;outline:1px dotted #333;outline-offset:-1px;"></div>
<div class="a t" style="left:464px;top:165.00px;font-size:10.6px;line-height:12px;color:#2a2a2a;letter-spacing:-0.612px;">ZPURV01</div>
<div class="a" style="left:671px;top:173px;width:242px;height:309px;background:#ffffff;border:1px solid #cccccc;box-sizing:border-box;box-shadow:2px 3px 5px rgba(0,0,0,0.10);"></div>
<svg class="a" style="left:678px;top:179px;" width="16" height="16" viewBox="0 0 16 16"><rect x="4.5" y="0.5" width="6" height="4" fill="#a8e0f0" stroke="#777"/><rect x="0.5" y="10.5" width="6" height="4" fill="#a8e0f0" stroke="#777"/><rect x="9.5" y="10.5" width="6" height="4" fill="#a8e0f0" stroke="#777"/><path d="M7.5 4.5V7.5M3.5 10.5L7.5 7.5L12.5 10.5" fill="none" stroke="#777"/></svg>
<div class="a t" style="left:705px;top:180.00px;font-size:12px;line-height:14px;color:#2a2a2a;letter-spacing:-0.196px;">Display Data Flow</div>
<svg class="a" style="left:678px;top:203px;" width="16" height="16" viewBox="0 0 16 16"><path d="M3 3.5L5 1H11L13 3.5H15L12 6H4L1 3.5Z" fill="#7ab8f0"/><path d="M1 4L4 6.5H12L15 4V6.5L12 9H4L1 6.5Z" fill="#4a90d8"/><path d="M1 8V10.5L4 13H12L15 10.5V8L12 10.5H4Z" fill="#2a6ab8"/><path d="M1 12V14L3 15.5H13L15 14V12L13 14H3Z" fill="#1a5aa8"/><path d="M4 7.5H12M4 11.5H12" stroke="#c0e0ff" stroke-width="0.8"/></svg>
<div class="a t" style="left:705px;top:204.00px;font-size:12px;line-height:14px;color:#2a2a2a;letter-spacing:-0.219px;">Assign Layer</div>
<svg class="a" style="left:896px;top:207px;" width="5" height="8" viewBox="0 0 5 8"><path d="M0 0L4.5 4L0 8Z" fill="#444"/></svg>
<div class="a" style="left:703px;top:224px;width:209px;height:1px;background:#e3e3e3;"></div>
<svg class="a" style="left:678px;top:230px;" width="16" height="16" viewBox="0 0 16 16"><rect x="1.5" y="0.5" width="13" height="15" fill="#fff" stroke="#4a6a98"/><path d="M4 4H12M4 6.5H12M7 9H12M4 11.5H12" stroke="#6a8ab8" stroke-width="0.9"/><rect x="4" y="8.2" width="2" height="1.6" fill="#6a8ab8"/></svg>
<div class="a t" style="left:705px;top:231.00px;font-size:12px;line-height:14px;color:#2a2a2a;letter-spacing:-0.173px;">Scenario Assignment and Usage</div>
<svg class="a" style="left:678px;top:254px;" width="16" height="16" viewBox="0 0 16 16"><rect x="1.5" y="0.5" width="11" height="14" fill="#fff" stroke="#4a6a98"/><path d="M4 4H10M4 6.5H10M4 9H10" stroke="#6a8ab8" stroke-width="0.9"/><path d="M6 10L9 12.5L6 15ZM10 10L13 12.5L10 15ZM13 10L16 12.5L13 15Z" fill="#30c030" stroke="#186018" stroke-width="0.5"/></svg>
<div class="a t" style="left:705px;top:255.00px;font-size:12px;line-height:14px;color:#2a2a2a;letter-spacing:-0.074px;">Scenario Quick Assignment</div>
<svg class="a" style="left:896px;top:258px;" width="5" height="8" viewBox="0 0 5 8"><path d="M0 0L4.5 4L0 8Z" fill="#444"/></svg>
<svg class="a" style="left:678px;top:278px;" width="16" height="16" viewBox="0 0 16 16"><path d="M2 1.5L7 8L2 14.5H5.5L10.5 8L5.5 1.5Z" fill="#1a70d0"/><path d="M6.5 1.5L11.5 8L6.5 14.5H9L14 8L9 1.5Z" fill="#4aa0f0"/></svg>
<div class="a t" style="left:705px;top:279.00px;font-size:12px;line-height:14px;color:#2a2a2a;letter-spacing:0.063px;">Collect for Migration Booster</div>
<div class="a" style="left:703px;top:299px;width:209px;height:1px;background:#e3e3e3;"></div>
<svg class="a" style="left:678px;top:305px;" width="16" height="16" viewBox="0 0 16 16"><rect x="1" y="1" width="13" height="13" fill="#fff" stroke="#1560b8" stroke-width="2"/><path d="M3 3.5L4.5 11.5L7.2 6L9 11.5L12 3.5" fill="none" stroke="#1560b8" stroke-width="2" stroke-linejoin="bevel"/><path d="M10.5 11H12.5V9L16 12.5L12.5 16V14H10.5Z" fill="#60e0f0" stroke="#1a70a8" stroke-width="0.8"/></svg>
<div class="a t" style="left:705px;top:306.00px;font-size:12px;line-height:14px;color:#2a2a2a;letter-spacing:-0.016px;">Create Documentation</div>
<svg class="a" style="left:896px;top:309px;" width="5" height="8" viewBox="0 0 5 8"><path d="M0 0L4.5 4L0 8Z" fill="#444"/></svg>
<svg class="a" style="left:678px;top:329px;" width="16" height="16" viewBox="0 0 16 16"><path d="M3.5 0.5H10.5L14.5 4.5V15.5H3.5Z" fill="#fff" stroke="#999"/><path d="M10.5 0.5V4.5H14.5" fill="none" stroke="#999"/><rect x="0.8" y="7" width="9" height="9" fill="#fff" stroke="#1560b8" stroke-width="1.6"/><path d="M2.5 8.8L3.6 14L5.3 10.5L6.5 14L8 8.8" fill="none" stroke="#1560b8" stroke-width="1.4" stroke-linejoin="bevel"/></svg>
<div class="a t" style="left:705px;top:330.00px;font-size:12px;line-height:14px;color:#2a2a2a;letter-spacing:0.074px;">Open Documentation</div>
<svg class="a" style="left:896px;top:333px;" width="5" height="8" viewBox="0 0 5 8"><path d="M0 0L4.5 4L0 8Z" fill="#444"/></svg>
<svg class="a" style="left:678px;top:353px;" width="16" height="16" viewBox="0 0 16 16"><rect x="1.5" y="1.5" width="8" height="9" fill="#fff" stroke="#888"/><rect x="3.5" y="3.5" width="8" height="9" fill="#fff" stroke="#888"/><rect x="6.5" y="6.5" width="8" height="9" fill="#fff" stroke="#555"/></svg>
<div class="a t" style="left:705px;top:354.00px;font-size:12px;line-height:14px;color:#2a2a2a;letter-spacing:0.015px;">List of all created documentations</div>
<div class="a" style="left:703px;top:374px;width:209px;height:1px;background:#e3e3e3;"></div>
<svg class="a" style="left:678px;top:380px;" width="16" height="16" viewBox="0 0 16 16"><path d="M1.5 1.5H14.5V11.5H6L3.5 14.5V11.5H1.5Z" fill="#fff" stroke="#888"/><path d="M5 6.5H6M7.5 6.5H8.5M10 6.5H11" stroke="#3a88c8" stroke-width="1.2"/></svg>
<div class="a t" style="left:705px;top:381.00px;font-size:12px;line-height:14px;color:#2a2a2a;letter-spacing:0.136px;">Comments</div>
<svg class="a" style="left:896px;top:384px;" width="5" height="8" viewBox="0 0 5 8"><path d="M0 0L4.5 4L0 8Z" fill="#444"/></svg>
<div class="a" style="left:703px;top:401px;width:209px;height:1px;background:#e3e3e3;"></div>
<div class="a" style="left:673px;top:403px;width:238px;height:24px;background:#d5d5d5;"></div>
<svg class="a" style="left:678px;top:407px;" width="16" height="16" viewBox="0 0 16 16"><path d="M8 0L15 4V12L8 16L1 12V4Z" fill="#1a78d0"/><path d="M8 3.3L12.2 5.7V10.3L8 12.7L3.8 10.3V5.7Z" fill="#e8f4ff"/><path d="M5.8 10.5V8.5M7.3 10.5V7.2M8.8 10.5V6.5M10.3 10.5V7.8" stroke="#3aa0e8" stroke-width="1.1"/></svg>
<div class="a t" style="left:705px;top:408.00px;font-size:12px;line-height:14px;color:#2a2a2a;letter-spacing:-0.279px;">System Scout</div>
<svg class="a" style="left:896px;top:411px;" width="5" height="8" viewBox="0 0 5 8"><path d="M0 0L4.5 4L0 8Z" fill="#444"/></svg>
<div class="a" style="left:703px;top:428px;width:209px;height:1px;background:#e3e3e3;"></div>
<svg class="a" style="left:678px;top:434px;" width="16" height="16" viewBox="0 0 16 16"><path d="M8 1.2L15.8 8L8 14.8L0.2 8Z" fill="#1a78d0" stroke="#1a78d0" stroke-width="0.8" stroke-linejoin="round"/><path d="M8 5.5L10.8 8L8 10.5L5.2 8Z" fill="#fff"/></svg>
<div class="a t" style="left:705px;top:435.00px;font-size:12px;line-height:14px;color:#2a2a2a;letter-spacing:-0.102px;">Open in Translation Steward</div>
<div class="a" style="left:703px;top:455px;width:209px;height:1px;background:#e3e3e3;"></div>
<svg class="a" style="left:678px;top:461px;" width="16" height="16" viewBox="0 0 16 16"><rect x="1" y="1" width="2.5" height="2.5" fill="#2a68c8"/><rect x="1" y="6.8" width="2.5" height="2.5" fill="#2a68c8"/><rect x="1" y="12.5" width="2.5" height="2.5" fill="#2a68c8"/><path d="M6 2.3H15M6 8H15M6 13.8H15" stroke="#222" stroke-width="1.2"/></svg>
<div class="a t" style="left:705px;top:462.00px;font-size:12px;line-height:14px;color:#2a2a2a;letter-spacing:-0.150px;">Others</div>
<svg class="a" style="left:896px;top:465px;" width="5" height="8" viewBox="0 0 5 8"><path d="M0 0L4.5 4L0 8Z" fill="#444"/></svg>
<div class="a" style="left:913px;top:403px;width:326px;height:147px;background:#ffffff;border:1px solid #cccccc;box-sizing:border-box;box-shadow:2px 3px 5px rgba(0,0,0,0.10);"></div>
<svg class="a" style="left:920px;top:409px;" width="16" height="16" viewBox="0 0 16 16"><rect x="0.5" y="6.5" width="5" height="4.5" fill="#f8f020" stroke="#111" stroke-width="1.2"/><path d="M5.5 8.7H15M12.5 6.2L15 8.7L12.5 11.2M8 8.7L12 2.5M9.5 2H12.3V4.8M8 8.7L12 14.8M9.5 15.2H12.3V12.5" fill="none" stroke="#1a1a90" stroke-width="1"/></svg>
<div class="a t" style="left:947px;top:410.00px;font-size:12px;line-height:14px;color:#2a2a2a;letter-spacing:-0.208px;">Where-Used Analysis</div>
<svg class="a" style="left:920px;top:433px;" width="16" height="16" viewBox="0 0 16 16"><rect x="1.5" y="1.5" width="9" height="7" fill="#e8f0ff" stroke="#8aa0c0"/><path d="M0.5 9.5H11.5V13H0.5Z" fill="#a8c0e8" stroke="#4a70b0" stroke-width="0.8"/><path d="M11 8H14L15.5 10V13H11Z" fill="#dde8f8" stroke="#4a70b0" stroke-width="0.8"/><circle cx="3.5" cy="14" r="1.4" fill="#fff" stroke="#4a70b0"/><circle cx="12.5" cy="14" r="1.4" fill="#fff" stroke="#4a70b0"/></svg>
<div class="a t" style="left:947px;top:434.00px;font-size:12px;line-height:14px;color:#2a2a2a;letter-spacing:-0.190px;">Usage in Transports</div>
<svg class="a" style="left:920px;top:457px;" width="16" height="16" viewBox="0 0 16 16"><path d="M1 1H4M1 1V4M15 15H12M15 15V12M1 15H4M1 15V12M15 1H12M15 1V4" stroke="#222" stroke-width="1.1" fill="none"/><path d="M4 5L6 3L9 4L11 2.5L13 4.5L12 7L13.5 9.5L11 12L8 11.5L5.5 13L3.5 10.5L4.5 8Z" fill="#7890b0" stroke="#111" stroke-width="1"/><circle cx="8.5" cy="7.8" r="2.8" fill="#f0c020" stroke="#806000" stroke-width="0.7"/></svg>
<div class="a t" style="left:947px;top:458.00px;font-size:12px;line-height:14px;color:#2a2a2a;letter-spacing:-0.101px;">Show included InfoObjects and their DataSources</div>
<svg class="a" style="left:920px;top:481px;" width="16" height="16" viewBox="0 0 16 16"><circle cx="9" cy="7.5" r="6" fill="#fff" stroke="#666" stroke-width="1.1"/><path d="M9 3.5V7.5H12.5" stroke="#555" fill="none" stroke-width="1.1"/><path d="M0.8 9V14C0.8 15.8 9 15.8 9 14V9Z" fill="#6aaaf0" stroke="#2a5aa0" stroke-width="0.8"/><ellipse cx="4.9" cy="9" rx="4.1" ry="1.5" fill="#d8ecff" stroke="#2a5aa0" stroke-width="0.8"/></svg>
<div class="a t" style="left:947px;top:482.00px;font-size:12px;line-height:14px;color:#2a2a2a;letter-spacing:-0.389px;">Data Loads and Usages</div>
<svg class="a" style="left:920px;top:505px;" width="16" height="16" viewBox="0 0 16 16"><circle cx="6" cy="6" r="4" fill="#dff0ff" stroke="#7a9ac8" stroke-width="1.3"/><path d="M8.5 5C8 3.5 7 3 6 3" stroke="#fff" stroke-width="1" fill="none"/><path d="M9.5 9.5L14 14" stroke="#e08a10" stroke-width="2.8" stroke-linecap="round"/></svg>
<div class="a t" style="left:947px;top:506.00px;font-size:12px;line-height:14px;color:#2a2a2a;letter-spacing:-0.030px;">Analyze/Compare</div>
<svg class="a" style="left:920px;top:529px;" width="16" height="16" viewBox="0 0 16 16"><path d="M0.5 15.5L5 5L9.5 15.5Z" fill="#f0b020"/><rect x="4" y="2" width="6" height="6" fill="#dde6f4" stroke="#6a80a8" stroke-width="0.8"/><path d="M10 8.5H15M12.5 6L15 8.5L12.5 11M9 8L12 3.5M10.5 2.5H12.5V4.5M9 9.5L12 13.5M10.5 14.5H12.5V12.5" fill="none" stroke="#222" stroke-width="0.9"/></svg>
<div class="a t" style="left:947px;top:530.00px;font-size:12px;line-height:14px;color:#2a2a2a;letter-spacing:-0.311px;">Data Lineage</div>
<svg class="a" style="left:289px;top:57px;" width="17" height="16" viewBox="0 0 17 16"><rect x="1" y="1" width="13" height="13" fill="#fff" stroke="#1560b8" stroke-width="2"/><path d="M3 3.5L4.5 11.5L7.2 6L9 11.5L12 3.5" fill="none" stroke="#1560b8" stroke-width="2" stroke-linejoin="bevel"/><path d="M10.5 11H12.5V9L16 12.5L12.5 16V14H10.5Z" fill="#60e0f0" stroke="#1a70a8" stroke-width="0.8"/></svg>
<svg class="a" style="left:348px;top:57px;" width="16" height="17" viewBox="0 0 16 17"><path d="M3.5 0.5H10.5L14.5 4.5V15.5H3.5Z" fill="#fff" stroke="#999"/><path d="M10.5 0.5V4.5H14.5" fill="none" stroke="#999"/><rect x="0.8" y="7" width="9" height="9" fill="#fff" stroke="#1560b8" stroke-width="1.6"/><path d="M2.5 8.8L3.6 14L5.3 10.5L6.5 14L8 8.8" fill="none" stroke="#1560b8" stroke-width="1.4" stroke-linejoin="bevel"/></svg>
<svg class="a" style="left:413px;top:57px;" width="14" height="17" viewBox="0 0 14 17"><rect x="2.5" y="1.5" width="7" height="6" fill="#e8e8e8" stroke="#888"/><rect x="2.5" y="9.5" width="7" height="6" fill="#e8e8e8" stroke="#888"/><path d="M1.5 4.5L4.5 7L11.5 0.8M1.5 12.5L4.5 15L11.5 8.8" fill="none" stroke="#3a9ad8" stroke-width="1.8"/></svg>
<svg class="a" style="left:448px;top:57px;" width="12" height="17" viewBox="0 0 12 17"><rect x="2.5" y="1.5" width="6" height="6" fill="#f4f4f4" stroke="#888"/><rect x="2.5" y="9.5" width="6" height="6" fill="#f4f4f4" stroke="#888"/><rect x="4" y="3" width="3" height="3" fill="#ccc"/><rect x="4" y="11" width="3" height="3" fill="#ccc"/></svg>
<svg class="a" style="left:486px;top:57px;" width="17" height="17" viewBox="0 0 17 17"><path d="M1.5 0.5H9.5L13.5 4.5V15.5H1.5Z" fill="#fff" stroke="#999"/><path d="M9.5 0.5V4.5H13.5" fill="none" stroke="#999"/><path d="M1 8.5H9M1 13.5H9M2 8L9 14M9 8L2 14" stroke="#2aa020" stroke-width="1.6"/><path d="M10 11H12V9.5L15.5 12.5L12 15.5V14H10Z" fill="#50d8e8" stroke="#1a88a8" stroke-width="0.6"/></svg>
<svg class="a" style="left:544px;top:57px;" width="17" height="17" viewBox="0 0 17 17"><rect x="0.5" y="0.5" width="12" height="13" fill="#fff" stroke="#2a1a2a"/><rect x="1.5" y="1.5" width="10" height="2" fill="#e8c860"/><rect x="2" y="4.5" width="9" height="2" fill="#6a80c8"/><path d="M2 8.5H4M2 10.5H4M2 12.5H4" stroke="#333"/><rect x="8" y="7" width="8.5" height="9.5" fill="#2a88d8"/><rect x="10" y="8" width="4.5" height="3" fill="#fff"/><rect x="10" y="12.5" width="4.5" height="3.5" fill="#cfe4ff"/></svg>
<svg class="a" style="left:578px;top:57px;" width="17" height="17" viewBox="0 0 17 17"><rect x="0.5" y="0.5" width="12" height="13" fill="#fff" stroke="#2a1a2a"/><rect x="1.5" y="1.5" width="10" height="2" fill="#e8c860"/><rect x="2" y="4.5" width="9" height="2" fill="#6a80c8"/><path d="M2 8.5H4M2 10.5H4M2 12.5H4" stroke="#333"/><path d="M4.5 15.5L6 10.5H11L13 9L15.5 10.5L14.5 14L11.5 15.5Z" fill="#2a90e8" stroke="#1a50a0" stroke-width="0.7"/></svg>
<svg class="a" style="left:612px;top:58px;" width="17" height="15" viewBox="0 0 17 15"><path d="M3 13C1 10 1.5 6.5 3.5 5" fill="none" stroke="#20c020" stroke-width="2.6"/><path d="M0.5 6L3.5 1.5L6.5 6Z" fill="#80e000"/><path d="M9 1.5C12 2 14 5 13 9" fill="none" stroke="#20c020" stroke-width="2.6"/><path d="M10 8.5L13 13L16 8.5Z" fill="#80e000"/><path d="M3 11.5C4 13 6 13.5 7 13.5" fill="none" stroke="#20c020" stroke-width="2.4"/></svg>
</body></html>
